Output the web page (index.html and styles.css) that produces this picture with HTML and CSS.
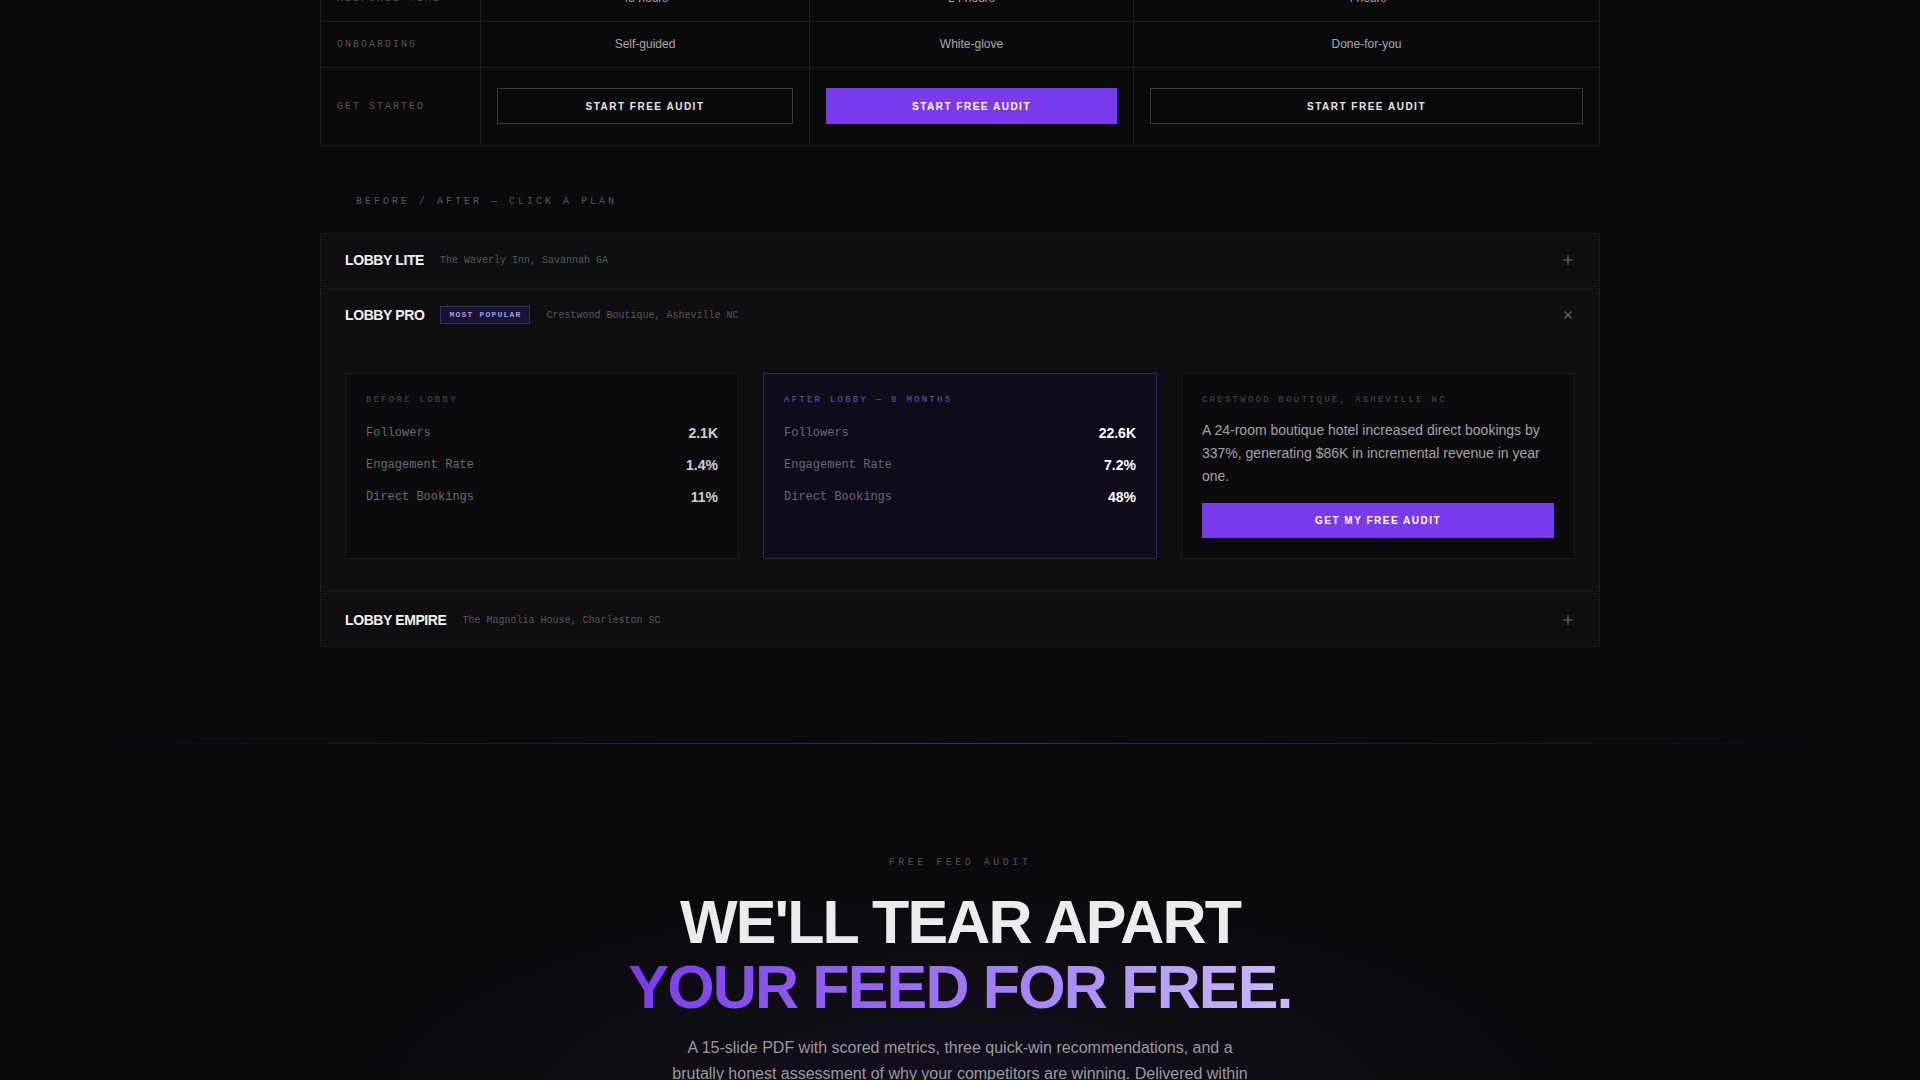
FILE: index.html
```html
<!DOCTYPE html>
<html lang="en">
<head>
<meta charset="utf-8">
<title>Lobby — Pricing</title>
<link rel="stylesheet" href="styles.css">
</head>
<body>
<main class="wrap">
  <div class="compare">
    <div class="crow">
      <div class="ccell label">Response time</div>
      <div class="ccell val">48 hours</div>
      <div class="ccell val">24 hours</div>
      <div class="ccell val">4 hours</div>
    </div>
    <div class="crow">
      <div class="ccell label">Onboarding</div>
      <div class="ccell val">Self-guided</div>
      <div class="ccell val">White-glove</div>
      <div class="ccell val">Done-for-you</div>
    </div>
    <div class="crow cta-row">
      <div class="ccell label">Get started</div>
      <div class="ccell"><a class="btn btn-outline">Start free audit</a></div>
      <div class="ccell"><a class="btn btn-solid">Start free audit</a></div>
      <div class="ccell"><a class="btn btn-outline">Start free audit</a></div>
    </div>
  </div>

  <p class="eyebrow ba">Before / After — click a plan</p>

  <div class="accordion">
    <section class="item">
      <header class="item-head">
        <h3 class="plan">LOBBY LITE</h3>
        <span class="loc">The Waverly Inn, Savannah GA</span>
        <svg class="icon" width="12" height="12" viewBox="0 0 12 12"><path d="M6 1v10M1 6h10" stroke="#6a6a6a" stroke-width="1.2" fill="none"/></svg>
      </header>
    </section>

    <section class="item open">
      <header class="item-head">
        <h3 class="plan">LOBBY PRO</h3>
        <span class="badge">Most popular</span>
        <span class="loc">Crestwood Boutique, Asheville NC</span>
        <svg class="icon" width="12" height="12" viewBox="0 0 12 12"><path d="M2.5 2.5l7 7M9.5 2.5l-7 7" stroke="#6a6a6a" stroke-width="1.2" fill="none"/></svg>
      </header>
      <div class="item-body">
        <div class="card">
          <p class="card-label">Before Lobby</p>
          <div class="stats">
            <div class="stat"><span class="k">Followers</span><span class="v">2.1K</span></div>
            <div class="stat"><span class="k">Engagement Rate</span><span class="v">1.4%</span></div>
            <div class="stat"><span class="k">Direct Bookings</span><span class="v">11%</span></div>
          </div>
        </div>
        <div class="card card-after">
          <p class="card-label">After Lobby — 8 months</p>
          <div class="stats">
            <div class="stat"><span class="k">Followers</span><span class="v">22.6K</span></div>
            <div class="stat"><span class="k">Engagement Rate</span><span class="v">7.2%</span></div>
            <div class="stat"><span class="k">Direct Bookings</span><span class="v">48%</span></div>
          </div>
        </div>
        <div class="card">
          <p class="card-label">Crestwood Boutique, Asheville NC</p>
          <p class="story">A 24-room boutique hotel increased direct bookings by 337%, generating $86K in incremental revenue in year one.</p>
          <a class="btn btn-solid btn-block">Get my free audit</a>
        </div>
      </div>
    </section>

    <section class="item">
      <header class="item-head">
        <h3 class="plan">LOBBY EMPIRE</h3>
        <span class="loc">The Magnolia House, Charleston SC</span>
        <svg class="icon" width="12" height="12" viewBox="0 0 12 12"><path d="M6 1v10M1 6h10" stroke="#6a6a6a" stroke-width="1.2" fill="none"/></svg>
      </header>
    </section>
  </div>
</main>

<div class="divider"></div>

<section class="audit">
  <p class="eyebrow center">Free feed audit</p>
  <h2 class="headline"><span class="l1">WE'LL TEAR APART</span><span class="l2">YOUR FEED FOR FREE.</span></h2>
  <p class="lead">A 15-slide PDF with scored metrics, three quick-win recommendations, and a brutally honest assessment of why your competitors are winning. Delivered within 48 hours.</p>
</section>
</body>
</html>
```

FILE: styles.css
```css
* { box-sizing: border-box; }

html, body {
  margin: 0;
  padding: 0;
  background: #0a0a0c;
  color: #e8e8e8;
  font-family: "Liberation Sans", Arial, sans-serif;
}

.wrap {
  width: 1280px;
  margin: -25px auto 0;
}

/* comparison table */
.compare {
  border: 1px solid #1f1f22;
}
.crow {
  display: grid;
  grid-template-columns: 159px 329px 324px 1fr;
}
.crow + .crow { border-top: 1px solid #1f1f22; }
.ccell {
  padding: 14px 16px;
  font-size: 12px;
  line-height: 17px;
  display: flex;
  align-items: center;
}
.ccell + .ccell { border-left: 1px solid #1f1f22; }
.ccell.label {
  font-family: "Liberation Mono", monospace;
  font-size: 10px;
  letter-spacing: 0.2em;
  text-transform: uppercase;
  color: #555558;
}
.ccell.val {
  justify-content: center;
  color: #a8a8a8;
}
.cta-row .ccell { padding: 20px 16px 21px; }

.btn {
  display: flex;
  align-items: center;
  justify-content: center;
  width: 100%;
  height: 36px;
  font-family: "Liberation Sans", Arial, sans-serif;
  font-weight: 700;
  font-size: 10px;
  letter-spacing: 0.15em;
  text-transform: uppercase;
  text-decoration: none;
}
.btn-outline {
  border: 1px solid #3a3a3d;
  color: #e6e6e6;
}
.btn-solid {
  background: #7c3aed;
  color: #ffffff;
}
.btn-block { height: 35px; margin-top: 16px; }

/* eyebrow */
.eyebrow {
  margin: 0;
  font-family: "Liberation Mono", monospace;
  font-size: 10px;
  line-height: 14px;
  text-transform: uppercase;
  color: #58585c;
}
.ba {
  margin: 49px 0 24px;
  padding-left: 36px;
  letter-spacing: 0.3em;
}

/* accordion */
.accordion {
  display: flex;
  flex-direction: column;
  gap: 1px;
}
.item {
  background: #0e0e10;
  border: 1px solid #1c1c1f;
}
.item-head {
  display: flex;
  align-items: center;
  gap: 16px;
  height: 52px;
  padding: 0 25px 0 24px;
}
.plan {
  margin: 0;
  font-size: 14px;
  font-weight: 700;
  letter-spacing: -0.4px;
  color: #f2f2f2;
}
.loc {
  font-family: "Liberation Mono", monospace;
  font-size: 10px;
  color: #57575a;
}
.badge {
  font-family: "Liberation Mono", monospace;
  font-weight: 700;
  font-size: 8px;
  line-height: 16px;
  letter-spacing: 0.15em;
  text-transform: uppercase;
  padding: 0 8px;
  color: #a996ec;
  background: #1a1430;
  border: 1px solid #3a2e68;
}
.icon { margin-left: auto; display: block; }

.item-body {
  display: grid;
  grid-template-columns: repeat(3, 1fr);
  gap: 24px;
  padding: 32px 24px 32px;
}
.card {
  border: 1px solid #1a1a1d;
  background: #0b0b0d;
  padding: 20px;
}
.card-after {
  background: #0f0c1a;
  border-color: #2d2563;
}
.card-label {
  margin: 0;
  font-family: "Liberation Mono", monospace;
  font-size: 9px;
  line-height: 12px;
  letter-spacing: 0.25em;
  text-transform: uppercase;
  color: #4a4a4d;
}
.card-after .card-label { color: #6a4fd3; }

.stats {
  margin-top: 17px;
  display: flex;
  flex-direction: column;
  gap: 12px;
}
.stat {
  display: flex;
  justify-content: space-between;
  align-items: center;
  line-height: 20px;
}
.stat .k {
  font-family: "Liberation Mono", monospace;
  font-size: 12px;
  color: #69696c;
}
.stat .v {
  font-size: 14px;
  font-weight: 700;
  color: #cfcfcf;
}
.card-after .stat .v { color: #ffffff; }

.story {
  margin: 13px 0 0;
  font-size: 14px;
  line-height: 23px;
  color: #a3a3a6;
}
.story + .btn-block { margin-top: 15px; }

/* divider */
.divider {
  height: 1px;
  margin-top: 96px;
  background: linear-gradient(90deg, rgba(124,58,237,0) 5%, rgba(100,70,210,0.55) 50%, rgba(124,58,237,0) 95%);
}

/* audit section */
.audit {
  padding: 112px 0 120px;
  text-align: center;
  background: radial-gradient(ellipse 900px 320px at 50% 360px, rgba(110,60,220,0.10), rgba(110,60,220,0) 70%);
}
.eyebrow.center {
  letter-spacing: 0.35em;
  color: #505054;
}
.headline {
  margin: 20px 0 0;
  font-size: 61px;
  line-height: 65px;
  font-weight: 700;
  letter-spacing: -0.03em;
}
.headline .l1 {
  display: block;
  color: #ececec;
}
.headline .l2 {
  display: inline-block;
  background: linear-gradient(90deg, #7c3aed 0%, #9f75f5 50%, #c9bbfd 100%);
  -webkit-background-clip: text;
  background-clip: text;
  color: transparent;
}
.lead {
  width: 590px;
  margin: 15px auto 0;
  font-size: 16px;
  line-height: 26px;
  color: #9a9a9e;
}
```
